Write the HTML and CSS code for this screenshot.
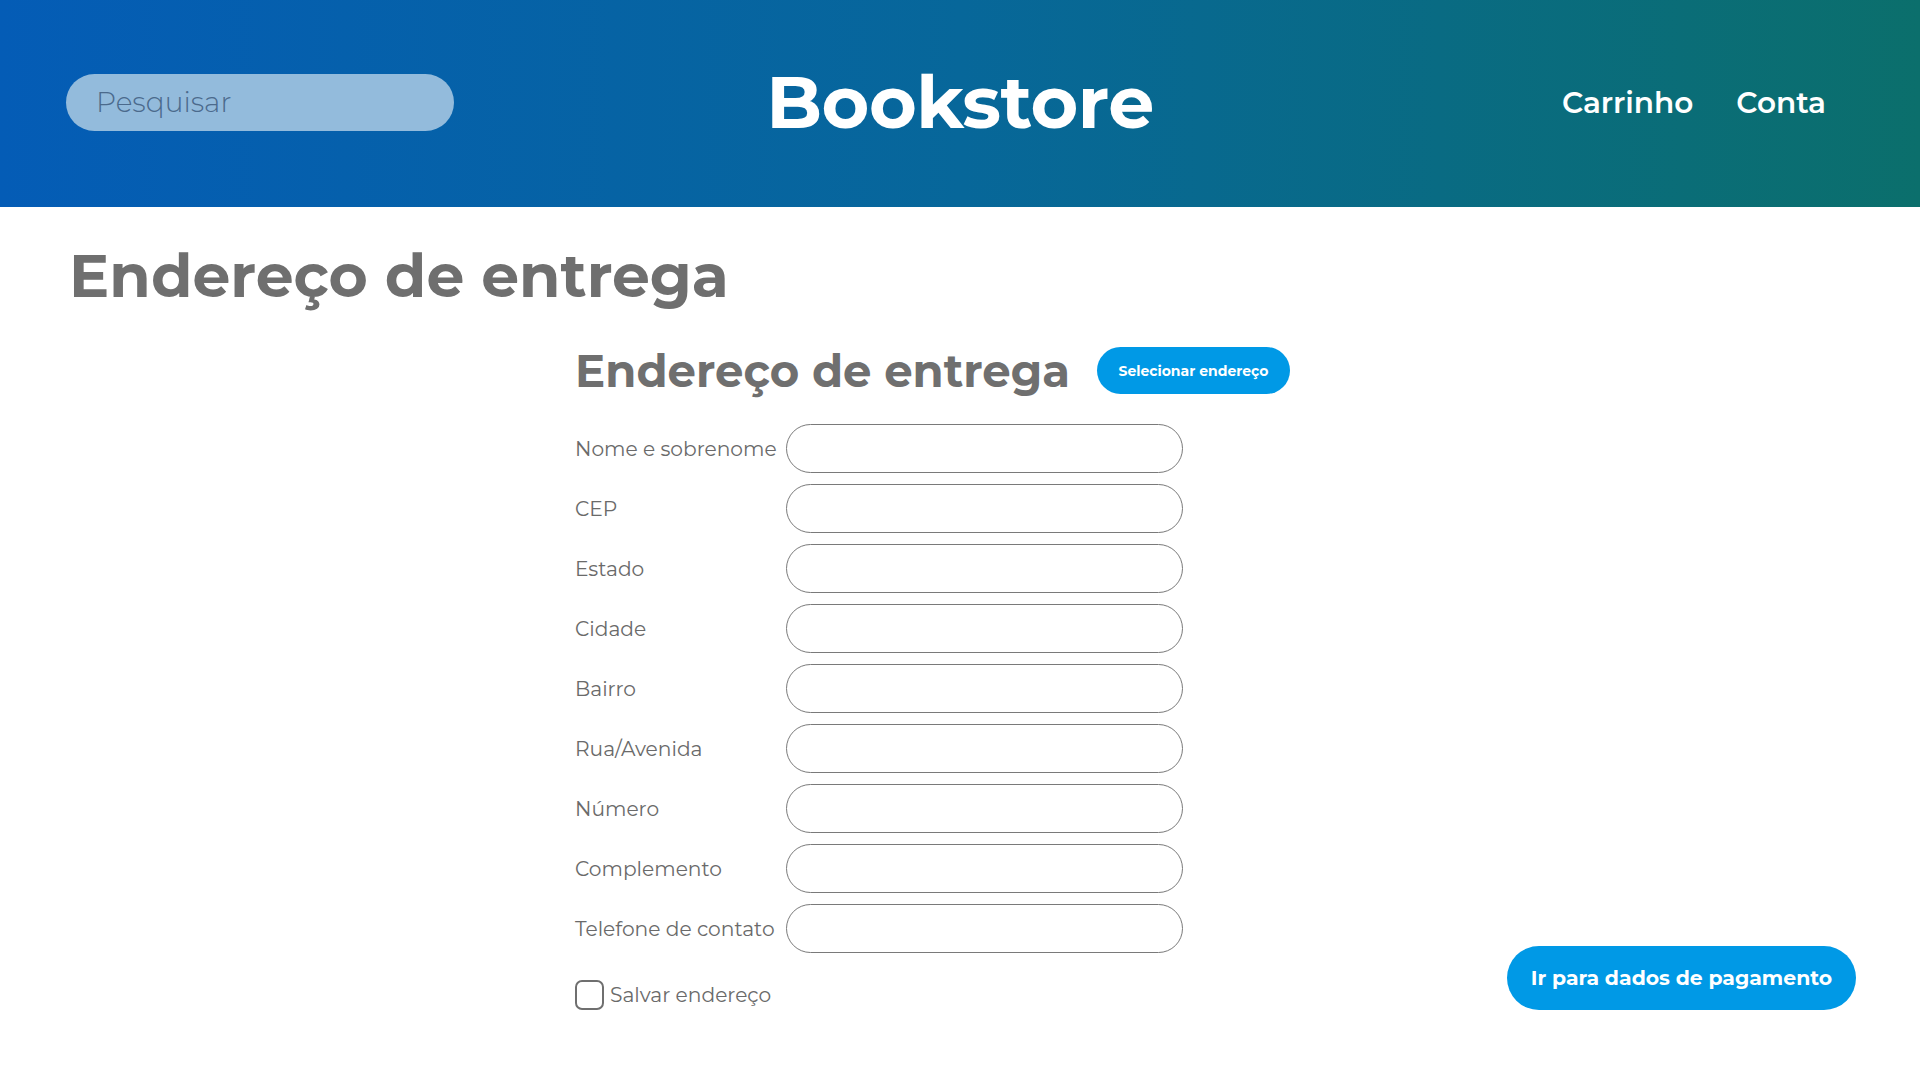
FILE: index.html
```html
<!DOCTYPE html>
<html lang="pt-BR">
<head>
<meta charset="utf-8">
<title>Bookstore - Endereço de entrega</title>
<link rel="stylesheet" href="styles.css">
</head>
<body>
<header class="topbar">
  <div class="topbar-left">
    <input class="search" type="text" placeholder="Pesquisar">
  </div>
  <div class="brand">Bookstore</div>
  <nav class="nav">
    <a class="nav-link" href="#">Carrinho</a>
    <a class="nav-link" href="#">Conta</a>
  </nav>
</header>
<main class="page">
  <h1 class="page-title">Endereço de entrega</h1>
  <div class="content">
    <section class="address">
      <div class="address-head">
        <h2 class="address-title">Endereço de entrega</h2>
        <button class="btn-small" type="button">Selecionar endereço</button>
      </div>
      <form class="form">
        <label class="row"><span class="label">Nome e sobrenome</span><input class="field" type="text"></label>
        <label class="row"><span class="label">CEP</span><input class="field" type="text"></label>
        <label class="row"><span class="label">Estado</span><input class="field" type="text"></label>
        <label class="row"><span class="label">Cidade</span><input class="field" type="text"></label>
        <label class="row"><span class="label">Bairro</span><input class="field" type="text"></label>
        <label class="row"><span class="label">Rua/Avenida</span><input class="field" type="text"></label>
        <label class="row"><span class="label">Número</span><input class="field" type="text"></label>
        <label class="row"><span class="label">Complemento</span><input class="field" type="text"></label>
        <label class="row"><span class="label">Telefone de contato</span><input class="field" type="text"></label>
        <label class="check"><span class="box"></span><span class="check-label">Salvar endereço</span></label>
      </form>
    </section>
    <button class="btn-main" type="button">Ir para dados de pagamento</button>
  </div>
</main>
</body>
</html>
```
FILE: styles.css
```css
* { box-sizing: border-box; }
html, body { margin: 0; padding: 0; }
body {
  font-family: "Montserrat", "Inter", "Open Sans", sans-serif;
  background: #ffffff;
  color: #6f6f6f;
  width: 1920px;
  height: 1080px;
  overflow: hidden;
}
.topbar {
  height: 207px;
  display: grid;
  grid-template-columns: 1fr auto 1fr;
  align-items: center;
  padding: 0 66px;
  background: linear-gradient(90deg, #045cb6 0%, #07679a 50%, #0b6f6c 100%);
}
.search {
  display: block;
  width: 388px;
  height: 57px;
  margin-top: -3px;
  border: none;
  border-radius: 29px;
  background: #93bbdc;
  padding: 0 30px;
  font-family: inherit;
  font-size: 28px;
  font-weight: 300;
  color: #4b6a8c;
  outline: none;
}
.search::placeholder { color: #4b6a8c; }
.brand {
  font-size: 73px;
  font-weight: 700;
  color: #ffffff;
  letter-spacing: -0.5px;
  margin-top: -4px;
}
.nav {
  display: flex;
  justify-content: flex-end;
  gap: 43px;
  padding-right: 28px;
  margin-top: -3px;
}
.nav-link {
  color: #ffffff;
  text-decoration: none;
  font-size: 29.5px;
  font-weight: 600;
}
.page { padding: 33px 64px 0 69px; }
.page-title {
  margin: 0;
  font-size: 60px;
  font-weight: 700;
  color: #6f6f6f;
  line-height: 1.2;
}
.content {
  display: flex;
  align-items: flex-end;
  justify-content: space-between;
  padding-left: 506px;
  margin-top: 34px;
}
.address-head {
  display: flex;
  align-items: center;
  gap: 27px;
  margin-bottom: 28px;
}
.address-title {
  margin: 0;
  font-size: 45px;
  font-weight: 700;
  color: #6f6f6f;
  line-height: 1.1;
}
.btn-small {
  width: 193px;
  height: 47px;
  border: none;
  border-radius: 24px;
  background: #0099e6;
  color: #ffffff;
  font-family: inherit;
  font-size: 14px;
  font-weight: 700;
}
.form { display: flex; flex-direction: column; gap: 11px; }
.row { display: flex; align-items: center; }
.label {
  width: 211px;
  font-size: 20.2px;
  color: #6a6a6a;
}
.field {
  width: 397px;
  height: 49px;
  border: 1px solid #7a7a7a;
  border-radius: 25px;
  background: #ffffff;
  outline: none;
}
.check {
  display: flex;
  align-items: center;
  gap: 6px;
  margin-top: 16px;
}
.box {
  width: 29px;
  height: 30px;
  border: 2px solid #6f6f6f;
  border-radius: 7px;
}
.check-label { font-size: 20.2px; color: #6a6a6a; }
.btn-main {
  width: 349px;
  height: 64px;
  border: none;
  border-radius: 32px;
  background: #0099e6;
  color: #ffffff;
  font-family: inherit;
  font-size: 20.4px;
  font-weight: 700;
}
```
